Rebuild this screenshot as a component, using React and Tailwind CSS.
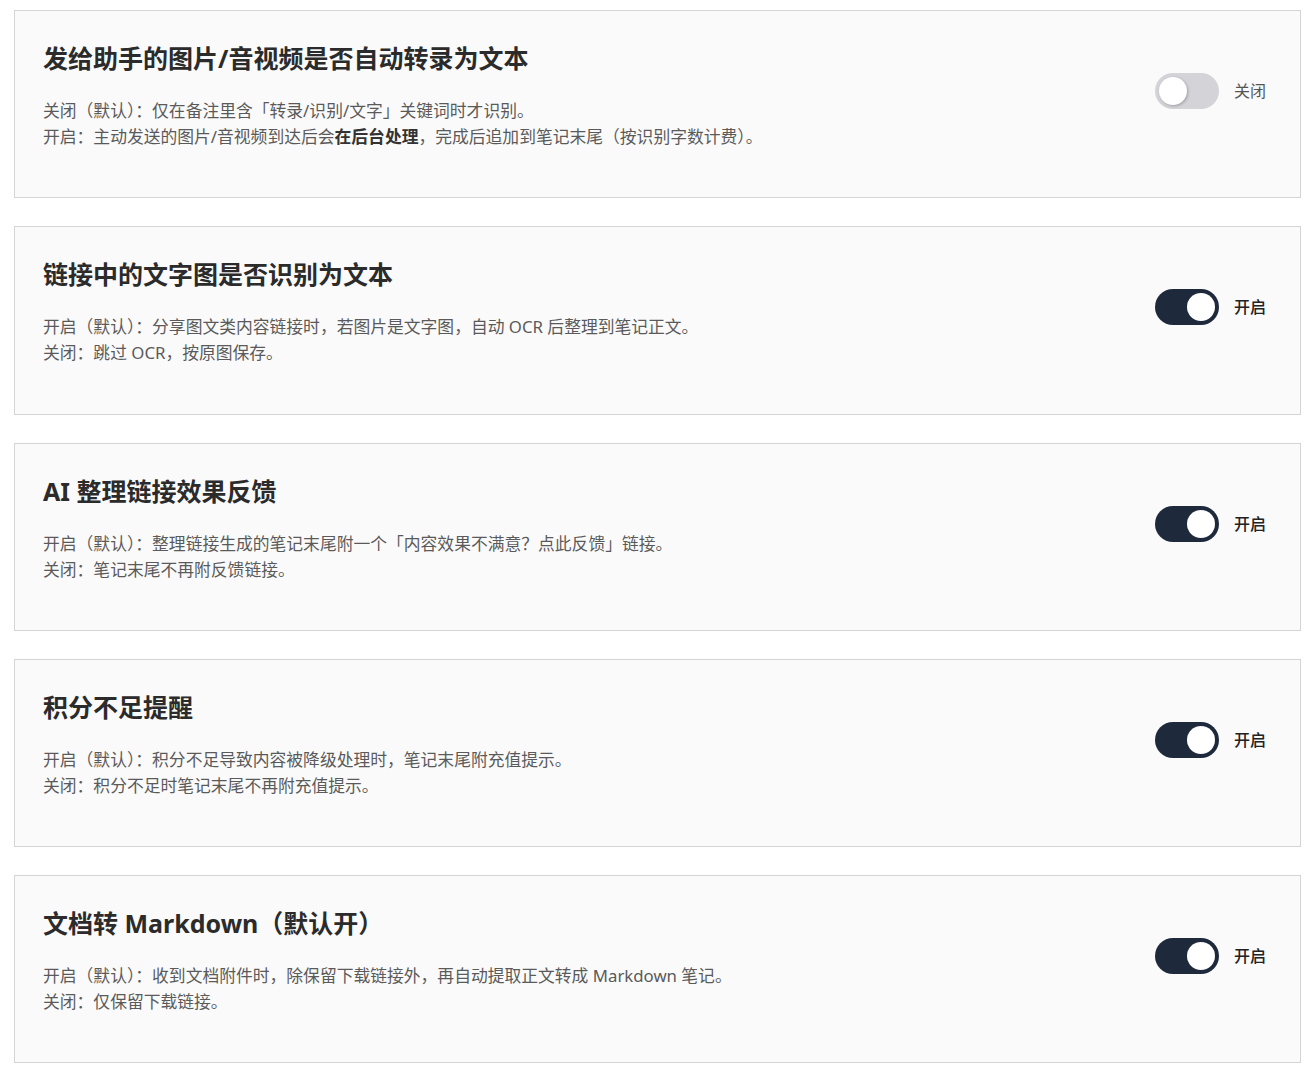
import React, { useState } from "react";

const settings = [
  {
    title: "发给助手的图片/音视频是否自动转录为文本",
    on: false,
    lines: [
      <>关闭（默认）：仅在备注里含「转录/识别/文字」关键词时才识别。</>,
      <>
        开启：主动发送的图片/音视频到达后会
        <b className="font-bold text-[#333]">在后台处理</b>
        ，完成后追加到笔记末尾（按识别字数计费）。
      </>,
    ],
  },
  {
    title: "链接中的文字图是否识别为文本",
    on: true,
    lines: [
      <>开启（默认）：分享图文类内容链接时，若图片是文字图，自动 OCR 后整理到笔记正文。</>,
      <>关闭：跳过 OCR，按原图保存。</>,
    ],
  },
  {
    title: "AI 整理链接效果反馈",
    on: true,
    lines: [
      <>开启（默认）：整理链接生成的笔记末尾附一个「内容效果不满意？点此反馈」链接。</>,
      <>关闭：笔记末尾不再附反馈链接。</>,
    ],
  },
  {
    title: "积分不足提醒",
    on: true,
    lines: [
      <>开启（默认）：积分不足导致内容被降级处理时，笔记末尾附充值提示。</>,
      <>关闭：积分不足时笔记末尾不再附充值提示。</>,
    ],
  },
  {
    title: "文档转 Markdown（默认开）",
    on: true,
    lines: [
      <>开启（默认）：收到文档附件时，除保留下载链接外，再自动提取正文转成 Markdown 笔记。</>,
      <>关闭：仅保留下载链接。</>,
    ],
  },
];

const Toggle = ({ on, onChange }) => (
  <button
    type="button"
    onClick={onChange}
    className={
      "relative h-9 w-16 shrink-0 rounded-full transition-colors " +
      (on ? "bg-[#1e293b]" : "bg-[#d4d4d8]")
    }
  >
    <span
      className={
        "absolute top-1 h-7 w-7 rounded-full bg-white transition-all " +
        (on ? "left-[32px]" : "left-1 shadow-[1px_1px_3px_rgba(0,0,0,0.25)]")
      }
    />
  </button>
);

const SettingCard = ({ item }) => {
  const [on, setOn] = useState(item.on);
  return (
    <div className="flex items-start justify-between border border-[#d4d4d4] bg-[#fafafa] pb-[47.25px] pl-[28px] pr-[34px] pt-[31px]">
      <div>
        <h2 className="text-[25px] font-bold leading-[32px] text-[#2b2b2b]">{item.title}</h2>
        <div className="mt-[24px] text-[16.8px] leading-[26px] text-[#5a5a5a]">
          {item.lines.map((l, i) => (
            <p key={i} className="h-[26px]">{l}</p>
          ))}
        </div>
      </div>
      <div className="mt-[31px] flex items-center gap-[15px]">
        <Toggle on={on} onChange={() => setOn(!on)} />
        <span className={"text-[16px] " + (on ? "font-medium text-[#222]" : "text-[#555]")}>
          {on ? "开启" : "关闭"}
        </span>
      </div>
    </div>
  );
};

export default function App() {
  return (
    <div
      className="flex min-h-screen flex-col gap-[28px] bg-white pb-[10px] pl-[14px] pr-[10px] pt-[10px]"
      style={{ fontFamily: '"Noto Sans", "Noto Sans CJK SC", sans-serif' }}
    >
      {settings.map((s) => (
        <SettingCard key={s.title} item={s} />
      ))}
    </div>
  );
}
